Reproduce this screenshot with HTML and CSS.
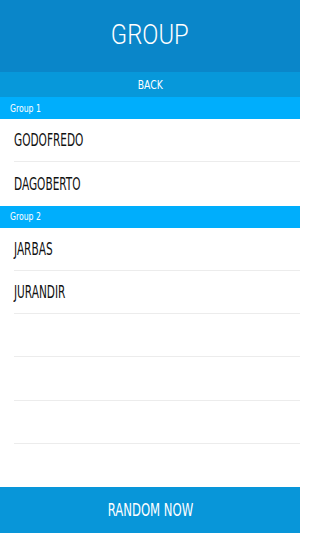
FILE: index.html
```html
<!DOCTYPE html>
<html>
<head>
<meta charset="utf-8">
<link rel="stylesheet" href="styles.css">
</head>
<body>
<div class="app">
  <header class="top"><span class="t">GROUP</span></header>
  <div class="back"><span class="t">BACK</span></div>
  <main class="list">
    <div class="section"><span class="t">Group 1</span></div>
    <div class="row"><span class="t">GODOFREDO</span></div>
    <div class="row last"><span class="t">DAGOBERTO</span></div>
    <div class="section"><span class="t">Group 2</span></div>
    <div class="row"><span class="t">JARBAS</span></div>
    <div class="row"><span class="t">JURANDIR</span></div>
    <div class="row"></div>
    <div class="row"></div>
    <div class="row"></div>
    <div class="row last"></div>
  </main>
  <footer class="bottom"><span class="t">RANDOM NOW</span></footer>
</div>
</body>
</html>
```
FILE: styles.css
```css
* { box-sizing: border-box; }
html, body { margin: 0; padding: 0; }
body {
  width: 300px;
  height: 533px;
  overflow: hidden;
  background: #fff;
  font-family: "DejaVu Sans Condensed", "DejaVu Sans", sans-serif;
}
.app {
  display: flex;
  flex-direction: column;
  height: 533px;
}
.t {
  display: inline-block;
  white-space: nowrap;
}
.top {
  flex: 0 0 72px;
  background: #0a86c9;
  color: #fff;
  font-family: Roboto, "DejaVu Sans", sans-serif;
  font-weight: 300;
  font-size: 28px;
  display: flex;
  align-items: center;
  justify-content: center;
  padding-bottom: 3px;
}
.top .t { transform: scaleX(0.85); }
.back {
  flex: 0 0 25px;
  background: #0798da;
  color: #fff;
  font-size: 12.5px;
  display: flex;
  align-items: center;
  justify-content: center;
}
.back .t { transform: scaleX(0.82); }
.list {
  flex: 1 1 auto;
  display: flex;
  flex-direction: column;
}
.section {
  flex: 0 0 22px;
  background: #00aefc;
  color: #fff;
  font-size: 11px;
  display: flex;
  align-items: center;
  padding-left: 10px;
}
.section .t { transform: scaleX(0.78); transform-origin: left center; }
.row {
  flex: 0 0 43.25px;
  margin-left: 14px;
  border-bottom: 1px solid #ececec;
  display: flex;
  align-items: center;
  color: #111;
  font-size: 17px;
}
.row .t { transform: scaleX(0.69); transform-origin: left center; }
.row.last { border-bottom: none; }
.bottom {
  flex: 0 0 46px;
  background: #0896d9;
  color: #fff;
  font-size: 18px;
  display: flex;
  align-items: center;
  justify-content: center;
  padding-bottom: 2px;
}
.bottom .t { transform: scaleX(0.72); }
```
